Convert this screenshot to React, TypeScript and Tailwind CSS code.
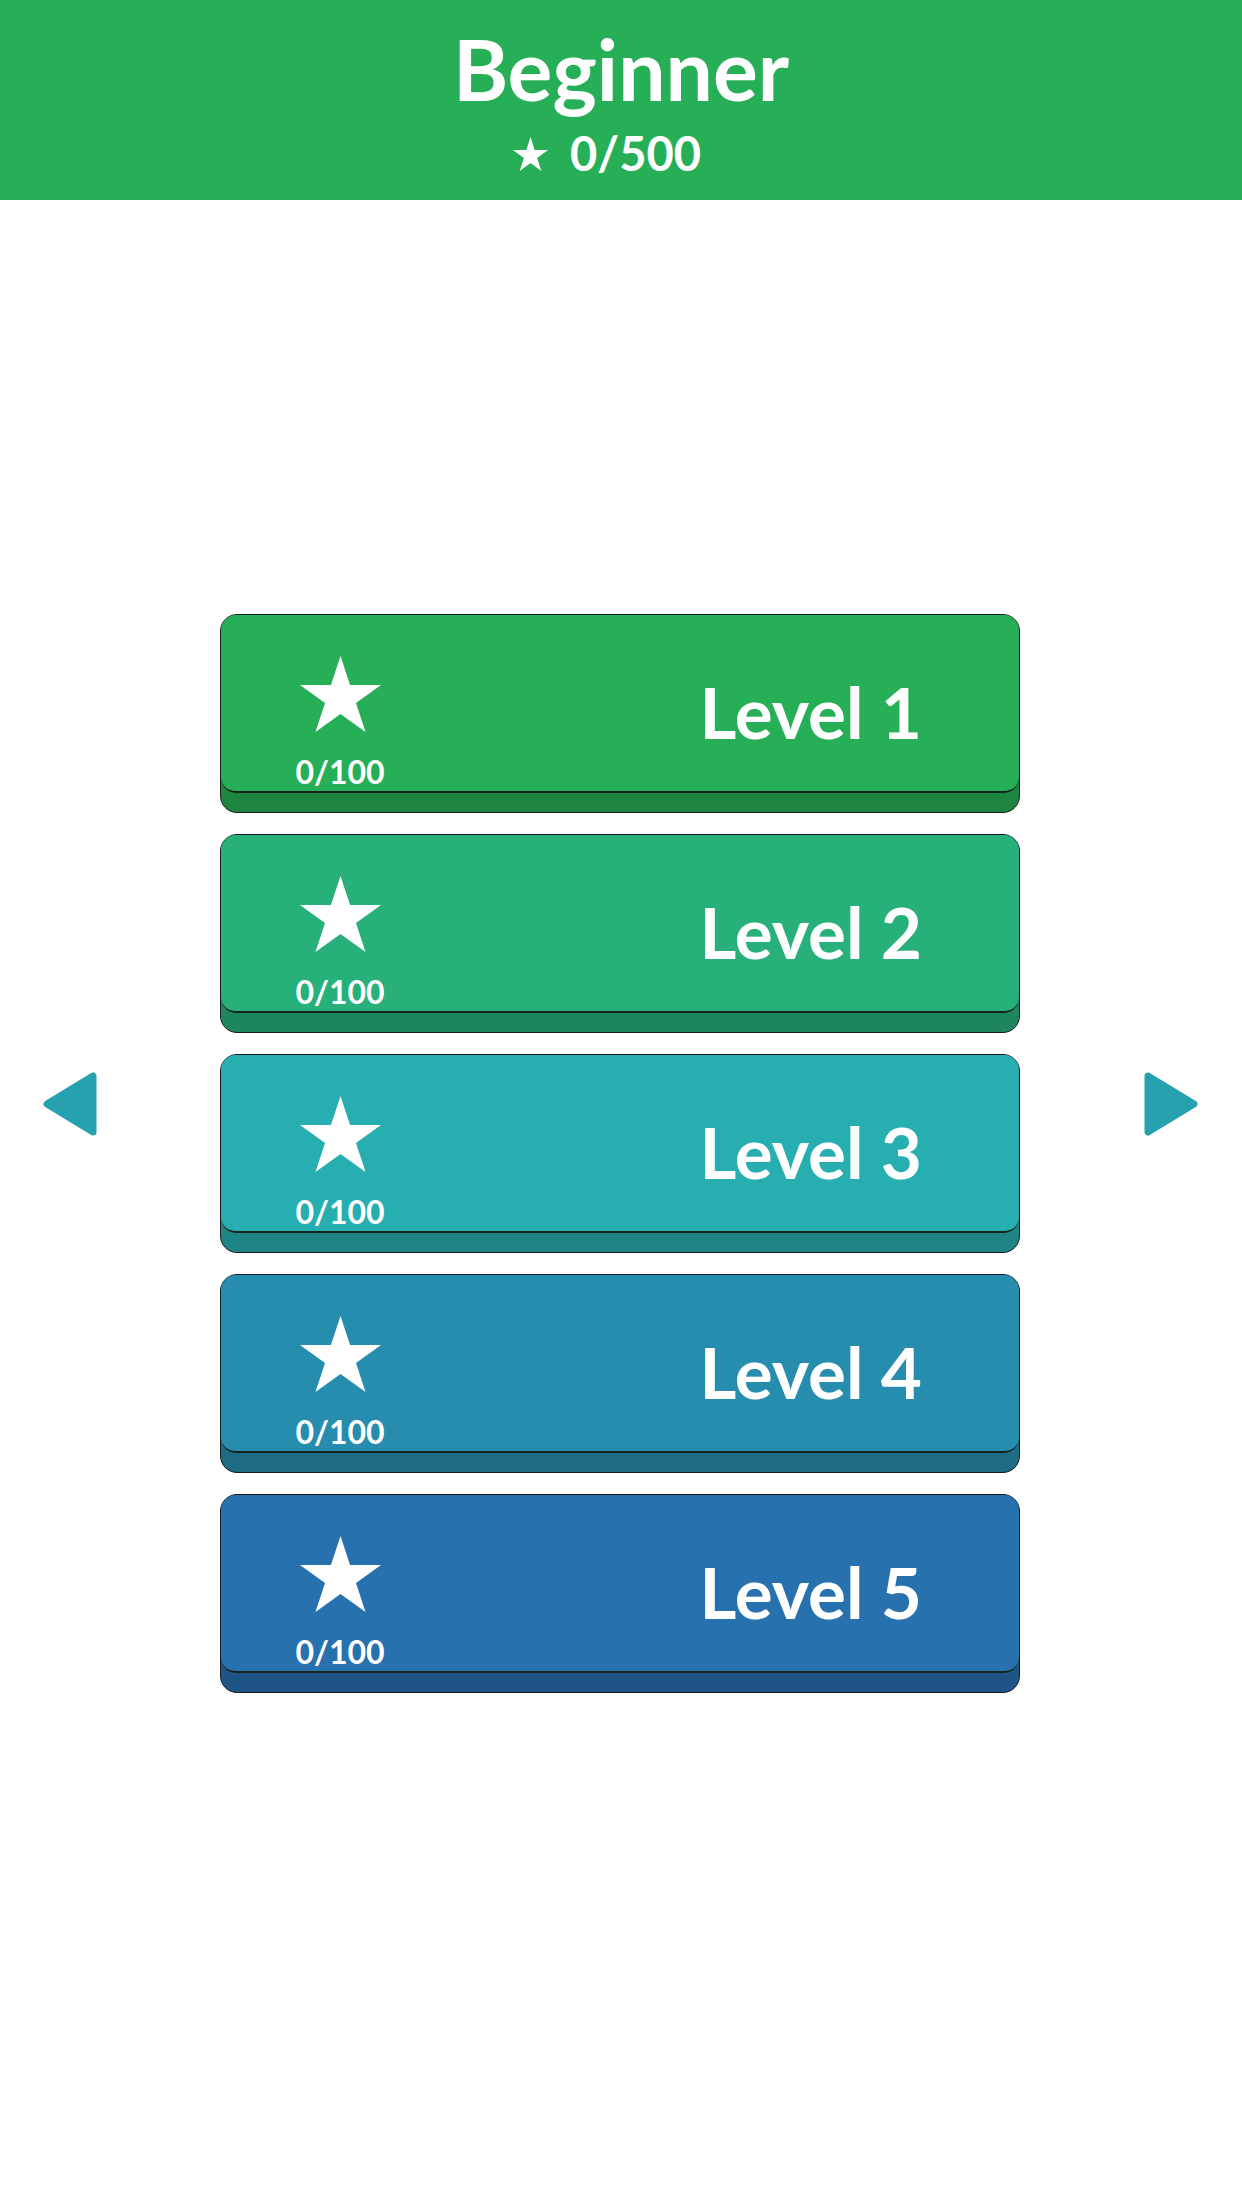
import React from "react";

function Star({ w, h, className }: { w: number; h: number; className?: string }) {
  const R = 50;
  const r = R * 0.382;
  const cx = R * Math.sin((72 * Math.PI) / 180);
  const cy = R;
  const pts = Array.from({ length: 10 }, (_, i) => {
    const a = -Math.PI / 2 + (i * Math.PI) / 5;
    const rr = i % 2 === 0 ? R : r;
    return `${(cx + rr * Math.cos(a)).toFixed(2)},${(cy + rr * Math.sin(a)).toFixed(2)}`;
  }).join(" ");
  const vw = 2 * cx;
  const vh = R * (1 + Math.cos((36 * Math.PI) / 180));
  return (
    <svg
      width={w}
      height={h}
      viewBox={`0 0 ${vw.toFixed(2)} ${vh.toFixed(2)}`}
      preserveAspectRatio="none"
      className={className}
    >
      <polygon points={pts} fill="#ffffff" />
    </svg>
  );
}

function Arrow({ dir }: { dir: "left" | "right" }) {
  const pts = dir === "left" ? "4,32 50,4 50,60" : "4,4 50,32 4,60";
  return (
    <svg width={54} height={64} viewBox="0 0 54 64">
      <polygon points={pts} fill="#26a1b0" stroke="#26a1b0" strokeWidth={7} strokeLinejoin="round" />
    </svg>
  );
}

const levels = [
  { n: 1, face: "bg-[#27af57]", base: "bg-[#1e8540]" },
  { n: 2, face: "bg-[#27b079]", base: "bg-[#1e865c]" },
  { n: 3, face: "bg-[#27aeb0]", base: "bg-[#1e8486]" },
  { n: 4, face: "bg-[#278daf]", base: "bg-[#1e6b86]" },
  { n: 5, face: "bg-[#2771ae]", base: "bg-[#1f5486]" },
];

function LevelButton({ n, face, base }: { n: number; face: string; base: string }) {
  return (
    <div className={`h-[199px] w-[800px] rounded-[17px] border-[1.5px] border-[#1c1c1c] ${base}`}>
      <div className={`flex h-[178px] flex-row rounded-[15px] border-b-[2px] border-[#16261c] ${face}`}>
        <div className="flex w-[238px] flex-col items-center pt-[41px]">
          <Star w={81} h={76} />
          <div className="mt-[24px] font-['Lato'] text-[32px] font-bold leading-none text-white">0/100</div>
        </div>
        <div className="flex flex-1 flex-row justify-end pr-[97px] pt-[61px]">
          <div className="font-['Lato'] text-[71px] font-bold leading-none text-white">Level {n}</div>
        </div>
      </div>
    </div>
  );
}

export default function App() {
  return (
    <div className="flex h-[2208px] w-[1242px] flex-col bg-white font-['Lato',sans-serif]">
      <header className="flex h-[200px] flex-col items-center bg-[#27af57] pt-[27px]">
        <div className="font-['Lato'] text-[84px] font-bold leading-none text-white">Beginner</div>
        <div className="mr-[28px] mt-[19px] flex flex-row items-center gap-[22px]">
          <Star w={35} h={34} />
          <span className="font-['Lato'] text-[47px] font-bold leading-none text-white">0/500</span>
        </div>
      </header>
      <div className="flex flex-row">
        <div className="w-[220px] pl-[43px] pt-[872px]">
          <Arrow dir="left" />
        </div>
        <div className="flex w-[802px] flex-col gap-[21px] pt-[414px]">
          {levels.map((l) => (
            <LevelButton key={l.n} n={l.n} face={l.face} base={l.base} />
          ))}
        </div>
        <div className="flex-1 pl-[122px] pt-[872px]">
          <Arrow dir="right" />
        </div>
      </div>
    </div>
  );
}
